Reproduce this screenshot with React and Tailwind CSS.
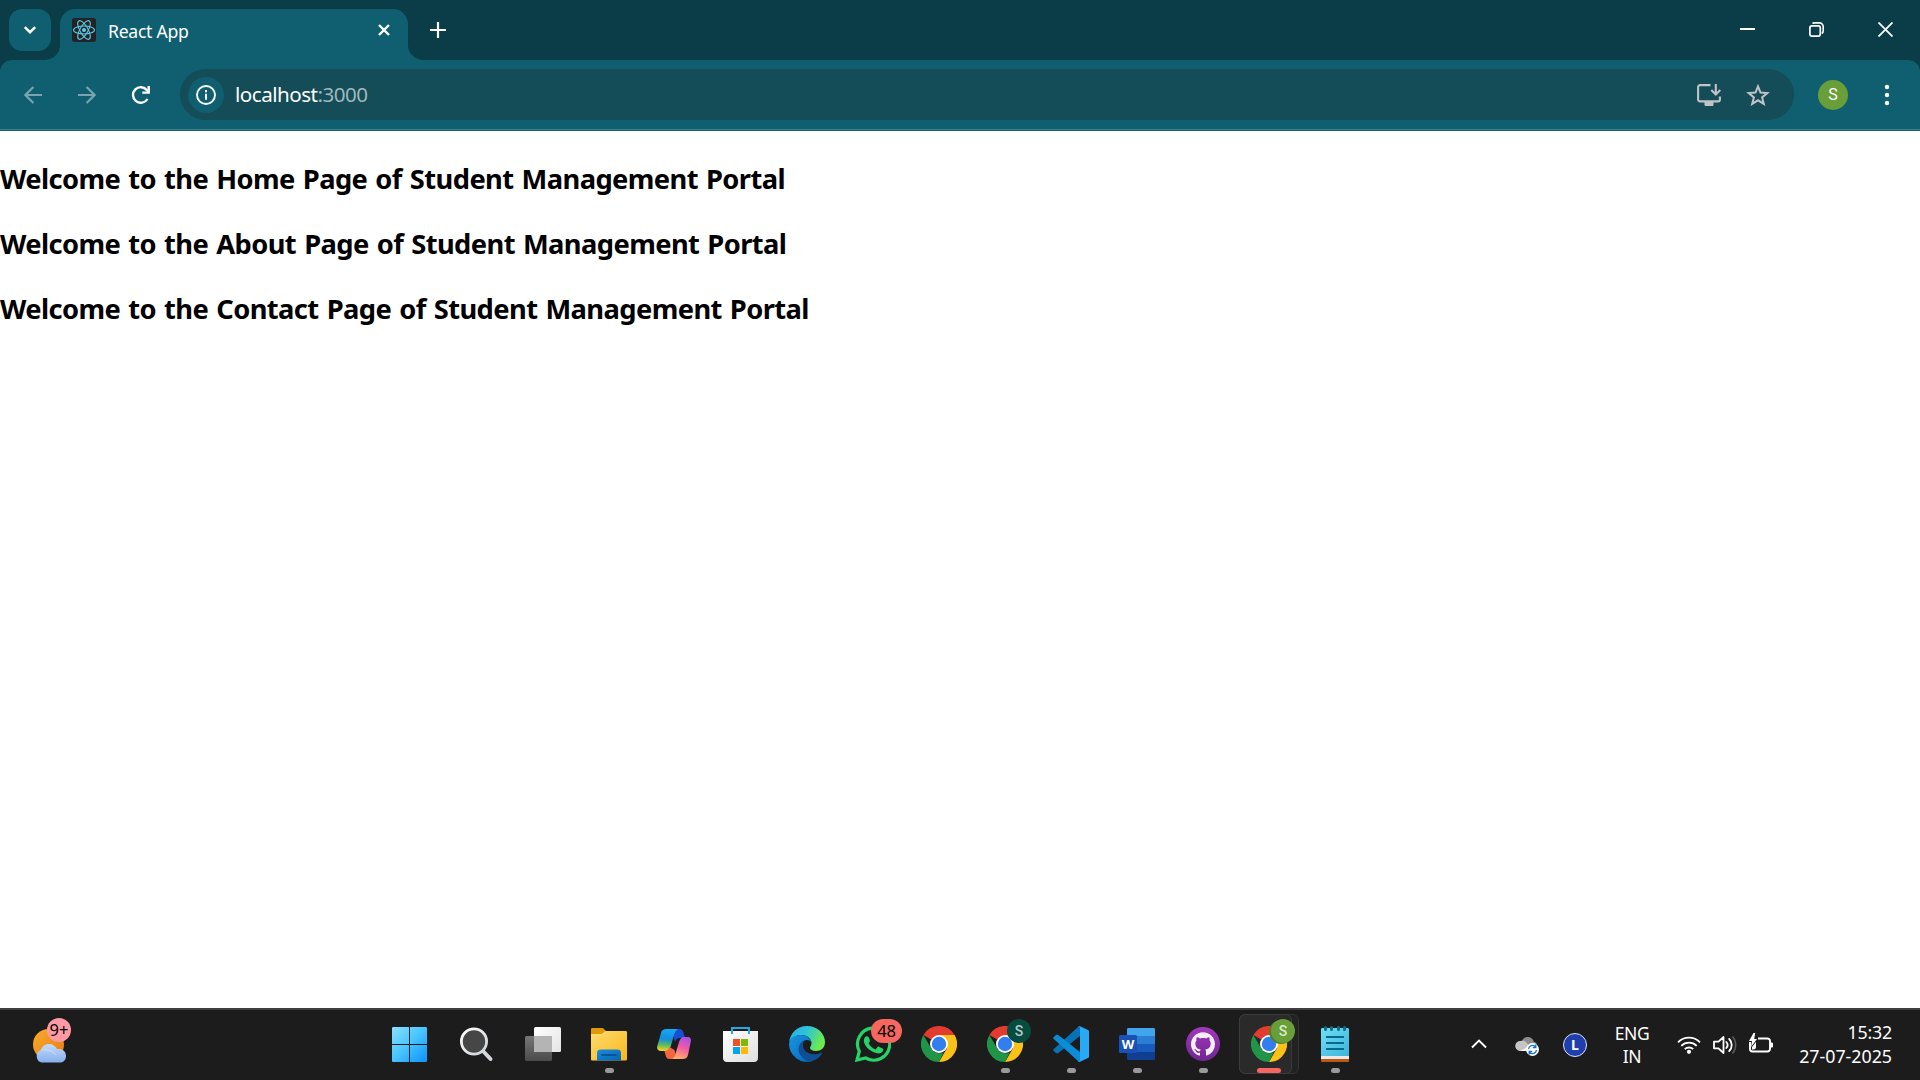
import React from "react";

const Icon = ({ w, h = w, className = "", children }) => (
  <svg width={w} height={h} viewBox={`0 0 ${w} ${h}`} fill="none" className={`block shrink-0 ${className}`}>
    {children}
  </svg>
);

function ReactLogo() {
  return (
    <Icon w={24}>
      <rect width="24" height="24" rx="2.5" fill="#222326" />
      <g stroke="#5ccbe6" strokeWidth="1.1">
        <ellipse cx="12" cy="12" rx="10.5" ry="4" />
        <ellipse cx="12" cy="12" rx="10.5" ry="4" transform="rotate(60 12 12)" />
        <ellipse cx="12" cy="12" rx="10.5" ry="4" transform="rotate(120 12 12)" />
      </g>
      <circle cx="12" cy="12" r="2" fill="#5ccbe6" />
    </Icon>
  );
}

function TabStrip() {
  return (
    <div className="flex h-[60px] bg-[#0a3d48]">
      <div className="ml-[9px] mt-[9px] flex size-[42px] items-center justify-center rounded-[13px] bg-[#0f5f70]">
        <Icon w={14} h={10}>
          <path d="M1.8 2.2 7 7.2l5.2-5" stroke="#fff" strokeWidth="2.5" />
        </Icon>
      </div>
      <div className="relative ml-[9px] mt-[9px] flex h-[51px] w-[348px] rounded-t-[15px] bg-[#0f5f70]">
        <Icon w={15} className="absolute bottom-0 -left-[15px]">
          <path d="M15 0v15H0A15 15 0 0 0 15 0Z" fill="#0f5f70" />
        </Icon>
        <Icon w={15} className="absolute bottom-0 -right-[15px]">
          <path d="M0 0v15h15A15 15 0 0 1 0 0Z" fill="#0f5f70" />
        </Icon>
        <div className="ml-3 mt-[9px]"><ReactLogo /></div>
        <span className="ml-3 mt-2 flex-1 whitespace-nowrap text-[17.6px] leading-7 tracking-[-0.28px] text-white">React App</span>
        <Icon w={12} className="mr-[18px] mt-[15px]">
          <path d="m1 1 10 10M11 1 1 11" stroke="#fff" strokeWidth="2.4" />
        </Icon>
      </div>
      <Icon w={16} className="ml-[22px] mt-[22px]">
        <path d="M8 0v16M0 8h16" stroke="#fff" strokeWidth="2.2" />
      </Icon>
      <div className="ml-auto mr-[27px] mt-[22px] flex gap-[54px]">
        <Icon w={15}><path d="M0 7h15" stroke="#fff" strokeWidth="2" /></Icon>
        <Icon w={15}>
          <rect x=".9" y="3.9" width="10.4" height="10.2" rx="2" stroke="#fff" strokeWidth="1.7" />
          <path d="M3.5 1.6C4 1 4.8.9 5.5.9h5a3.7 3.7 0 0 1 3.7 3.7V9c0 1-.4 2-1.4 2.5" stroke="#fff" strokeWidth="1.6" />
        </Icon>
        <Icon w={15}><path d="m.5.5 14 14M14.5.5l-14 14" stroke="#fff" strokeWidth="1.8" /></Icon>
      </div>
    </div>
  );
}

function Toolbar() {
  return (
    <div className="h-[71px] bg-[#0a3d48]">
      <div className="flex h-[71px] items-start rounded-t-[12px] bg-[#0f5f70]">
        <div className="flex h-[69px] w-full items-center">
          <Icon w={18} className="ml-6 mt-[1px]">
            <path d="M18 9H2M9.4 1 1.4 9l8 8" stroke="#7ba3ad" strokeWidth="2.2" />
          </Icon>
          <Icon w={18} className="ml-9 mt-[1px]">
            <path d="M0 9h16M8.6 1l8 8-8 8" stroke="#7ba3ad" strokeWidth="2.2" />
          </Icon>
          <Icon w={20} className="ml-[35px] mt-[1px]">
            <path d="M16.5 14A7.8 7.8 0 1 1 16 5.2L17.8 7" stroke="#fff" strokeWidth="2.4" />
            <path d="M18.9 1v7.8h-7.6V6.5h5.2V1Z" fill="#fff" />
          </Icon>
          <div className="ml-[29px] flex h-[51px] w-[1614px] items-center rounded-full bg-[#144c58] pl-2">
            <div className="flex size-9 items-center justify-center rounded-full bg-[#0f5f70]">
              <Icon w={20}>
                <circle cx="10" cy="10" r="9" stroke="#fff" strokeWidth="1.9" />
                <path d="M10 8.8v6M10 5v2.2" stroke="#fff" strokeWidth="2" />
              </Icon>
            </div>
            <span className="-mt-[2px] ml-[11px] flex-1 whitespace-nowrap text-[20.6px] leading-7 tracking-[-0.5px] text-white">
              localhost<span className="text-[#9fb8be]">:3000</span>
            </span>
            <Icon w={24} h={22} className="mr-[25px]">
              <path d="M13.5 1.1H3A1.9 1.9 0 0 0 1.1 3v12.5a1.9 1.9 0 0 0 1.9 1.9h18a1.9 1.9 0 0 0 1.9-1.9v-3" stroke="#c0c4c6" strokeWidth="2.1" />
              <path d="M18.8 0v9M14.3 6l4.5 4.5L23.3 6" stroke="#c0c4c6" strokeWidth="2.1" />
              <path d="M7.5 17.5h9V21a1 1 0 0 1-1 1h-7a1 1 0 0 1-1-1Z" fill="#c0c4c6" />
            </Icon>
            <Icon w={24} h={22} className="mr-6">
              <path d="m12 2.4 2.5 6.2 6.8.5-5.2 4.300 1.700 6.500L12 16.300l-5.800 3.600 1.700-6.500-5.200-4.300 6.800-.5Z" stroke="#c0c4c6" strokeWidth="2" />
            </Icon>
          </div>
          <div className="ml-6 flex size-[30px] items-center justify-center rounded-full bg-[#689f38] font-[Roboto] text-[16px] text-white">S</div>
          <Icon w={6} h={22} className="ml-9">
            <circle cx="3" cy="3" r="2.2" fill="#fff" />
            <circle cx="3" cy="11" r="2.2" fill="#fff" />
            <circle cx="3" cy="19" r="2.2" fill="#fff" />
          </Icon>
        </div>
      </div>
      <div className="-mt-[2px] h-px bg-[#3f7f8d]" />
    </div>
  );
}

function Gradient({ id, from, mid, to, x2 = 1, y2 = 1 }) {
  return (
    <linearGradient id={id} x1="0" y1="0" x2={x2} y2={y2}>
      <stop stopColor={from} />
      {mid && <stop offset=".5" stopColor={mid} />}
      <stop offset="1" stopColor={to} />
    </linearGradient>
  );
}

const StartIcon = () => (
  <Icon w={36} className="-translate-x-[1px]">
    <defs>
      <linearGradient id="win" gradientUnits="userSpaceOnUse" x1="0" y1="1" x2="35" y2="36">
        <stop stopColor="#8be0fd" /><stop offset=".45" stopColor="#4cc7ff" /><stop offset="1" stopColor="#0a93fb" />
      </linearGradient>
    </defs>
    <path fill="url(#win)" d="M1.5 1H17v17H0V2.500C0 1.500.5 1 1.500 1ZM18 1h15.500c1 0 1.500.5 1.500 1.500V18H18ZM0 19h17v17H1.500C.5 36 0 35.500 0 34.500ZM18 19h17v15.500c0 1-.5 1.500-1.500 1.500H18Z" />
  </Icon>
);

const SearchIcon = () => (
  <Icon w={36}>
    <defs><Gradient id="lens" from="#fff" to="#ccd2d8" /></defs>
    <path d="m24 25 7.500 8" stroke="#d3d7db" strokeWidth="4" strokeLinecap="round" />
    <circle cx="15" cy="15.500" r="12.600" fill="#464646" stroke="url(#lens)" strokeWidth="2.800" />
  </Icon>
);

const TaskViewIcon = () => (
  <Icon w={36}>
    <defs><Gradient id="tvf" from="#fff" to="#e4e4e4" /><Gradient id="tvb" from="#777" to="#4b4b4b" x2={0} /></defs>
    <rect y="10" width="27" height="25" rx="1.5" fill="url(#tvb)" />
    <rect x="9" y="1" width="27" height="25" rx="1.5" fill="url(#tvf)" />
    <path d="M9 10h18v16H10.500A1.500 1.500 0 0 1 9 24.500Z" fill="#b4b4b4" />
  </Icon>
);

const ExplorerIcon = () => (
  <Icon w={36}>
    <defs><Gradient id="fold" from="#ffdc72" to="#f8b817" /><Gradient id="pock" from="#1890dc" to="#0863b4" /></defs>
    <path d="M0 3.500C0 2.500.5 2 1.500 2H11c1.500 0 2.500 1.500 4 3v4H0Z" fill="#dd9b07" />
    <path d="M0 8h10c2 0 3-3 5-3h19.500c1 0 1.500.5 1.500 1.500V33c0 1-.5 1.500-1.500 1.500h-33C.5 34.500 0 34 0 33Z" fill="url(#fold)" />
    <path d="M6 34.500V27c0-2.500 1.500-3.500 3.500-3.500h17c2 0 3.500 1 3.500 3.500v7.500Z" fill="url(#pock)" />
    <path d="M11 29h14" stroke="#07549b" strokeWidth="2" strokeLinecap="round" />
  </Icon>
);

const CopilotIcon = () => (
  <Icon w={36}>
    <defs>
      <linearGradient id="cpa" x1=".4" y1="0" x2=".3" y2="1"><stop stopColor="#18a7f5" /><stop offset=".45" stopColor="#138ddc" /><stop offset=".72" stopColor="#58ba64" /><stop offset="1" stopColor="#ffd21d" /></linearGradient>
      <linearGradient id="cpb" x1=".7" y1="0" x2=".4" y2="1"><stop stopColor="#a751e8" /><stop offset=".45" stopColor="#ed58a8" /><stop offset="1" stopColor="#ffab69" /></linearGradient>
    </defs>
    <path d="M15 3h8c2 0 3 2 3.500 4l1.500 5h-5c-3 0-4 1-5 4Z" fill="#184fd2" />
    <path d="M9.500 3H21c-2 1-3 3-4 6l-3.500 12c-1 3-2.500 4-4.500 4H4c-3 0-4.500-2-3.700-5L4 7c.8-3 2.500-4 5.500-4Z" fill="url(#cpa)" />
    <path d="M20 33h-8c-2 0-3-2-3.500-4l-1-4c3 0 4-1 5-4l5 3Z" fill="#f5653f" />
    <path d="M25.500 33H15c2-1 3-3 4-7l3-10c1-3 2.500-5 5-5h3.500c3 0 4 2 3.200 5L31 29c-.8 3-2.500 4-5.500 4Z" fill="url(#cpb)" />
  </Icon>
);

const StoreIcon = () => (
  <Icon w={36}>
    <defs><Gradient id="bag" from="#fff" to="#dedede" /></defs>
    <path d="M0 5h35v27c0 2.500-1.500 4-4 4H4c-2.500 0-4-1.500-4-4Z" fill="url(#bag)" />
    <path d="M9 8V2h17v6" stroke="#25a9e5" strokeWidth="2" />
    <path fill="#f25022" d="M10 13h7v7h-7Z" /><path fill="#7fba00" d="M18 13h7v7h-7Z" />
    <path fill="#00a4ef" d="M10 21h7v7h-7Z" /><path fill="#ffb900" d="M18 21h7v7h-7Z" />
  </Icon>
);

const EdgeIcon = () => (
  <Icon w={36}>
    <defs>
      <Gradient id="edt" from="#2ba9e9" mid="#2dc5d6" to="#6ceb4c" y2={0.4} />
      <Gradient id="edb" from="#1996e0" to="#0765bc" />
    </defs>
    <path d="M0 17C1 7 8 0 18 0c11 0 18 8 18 16 0 6-4 9-9 9-4 0-6-1.500-6-3 0-1.500 1.500-2 1.500-5 0-4-4-8-10-8C6 9 1 13 0 17Z" fill="url(#edt)" />
    <path d="M0 18C1 12 6 9 11.500 9c6 0 10.500 3.500 11 7.500-2-3-5-3-7-2-5 2-7 8-3 14 3 4.500 7 7 11 6.500A18 18 0 0 1 0 18Z" fill="url(#edb)" />
    <path d="M15 15c-5 2-7 8-4 13.500 3 5 8 7.500 12 6.500 5-1 8-4.500 10-7.500.5-1-.3-1.200-1-.8-9 4-18-.5-18-7.200 0-2 .5-3.500 1-4.500Z" fill="#104f97" />
  </Icon>
);

const WhatsAppIcon = () => (
  <Icon w={36}>
    <path d="M2 34l2.300-8.600A16.100 16.100 0 1 1 10.600 32Z" stroke="#25d366" strokeWidth="3.200" />
    <path d="M9.300 12.500c.8-2 2.100-2.500 3.500-2 .8.300 1.100 1.200 1.700 2.800.7 1.800.5 2.100-.9 3.900 1.800 3.300 3.800 4.900 7 6.200l2-2.300c.6-.7 1.100-.6 1.800-.2l3.100 1.500c.8.4.9.9.6 2-.7 2.400-3.500 3.500-6 2.900-7.400-1.900-11.300-6-13-10.700-.4-1.300-.2-2.800.2-4.100Z" fill="#25d366" />
  </Icon>
);

const ChromeIcon = () => (
  <Icon w={36}>
    <path d="M18 18 2.400 9A18 18 0 0 1 33.600 9Z" fill="#e33b2e" />
    <path d="M18 9h15.600A18 18 0 0 1 18 36l7.800-13.500Z" fill="#fbc116" />
    <path d="M2.400 9 10.200 22.500c3 5 9 6 12.600 3.700L18 36A18 18 0 0 1 2.400 9Z" fill="#209547" />
    <circle cx="18" cy="18" r="9" fill="#fff" />
    <circle cx="18" cy="18" r="7.200" fill="#327eee" />
  </Icon>
);

const VSCodeIcon = () => (
  <Icon w={36}>
    <path d="M.8 25 3 27c.8.5 1.600.5 2.300 0L27 10V.5C26 .3 25.500.5 25 1L.8 23c-.8.8-.8 1.300 0 2Z" fill="#0872b6" />
    <path d="M.8 11 3 9c.8-.5 1.600-.5 2.300 0L27 26v9.500c-1 .2-1.500 0-2-.5L.8 13c-.8-.8-.8-1.300 0-2Z" fill="#0c8cd4" />
    <path d="M26.500 0 35 4c.7.4 1 .8 1 1.600v24.800c0 .8-.3 1.200-1 1.600l-8.500 4c-.7.2-1.200 0-1.700-.6.8.3 2.200 0 2.200-1.400V2c0-1.500-1.500-1.800-2.200-1.300.5-.6 1-.9 1.700-.7Z" fill="#27a9f5" />
  </Icon>
);

const WordIcon = () => (
  <div className="relative flex size-9">
    <Icon w={36}>
      <path d="M8 3.500C8 2.500 8.500 2 9.500 2h25c1 0 1.500.5 1.500 1.500V10H8Z" fill="#41a5ee" />
      <path d="M8 10h28v8H8Z" fill="#2b7cd3" /><path d="M8 18h28v8H8Z" fill="#185abd" />
      <path d="M8 26h28v6.500c0 1-.5 1.500-1.500 1.500h-25c-1 0-1.500-.5-1.500-1.500Z" fill="#103f91" />
      <rect y="9" width="18" height="18" rx="1.5" fill="#1b50b6" />
    </Icon>
    <span className="absolute left-0 top-[9px] w-[18px] text-center text-[13px] font-bold leading-[18px] text-white">W</span>
  </div>
);

const GitHubIcon = () => (
  <Icon w={36}>
    <defs><Gradient id="gh" from="#a238bd" to="#70268f" x2={0} /></defs>
    <circle cx="18" cy="18" r="17" fill="url(#gh)" />
    <g transform="translate(6 6.2)">
      <path fill="#f4eef7" d="M12 0C5.370 0 0 5.370 0 12c0 5.310 3.435 9.795 8.205 11.385.6.105.825-.255.825-.57 0-.285-.015-1.230-.015-2.235-3.015.555-3.795-.735-4.035-1.410-.135-.345-.720-1.410-1.230-1.695-.420-.225-1.020-.780-.015-.795.945-.015 1.620.870 1.845 1.230 1.080 1.815 2.805 1.305 3.495.990.105-.780.420-1.305.765-1.605-2.670-.3-5.460-1.335-5.460-5.925 0-1.305.465-2.385 1.230-3.225-.120-.3-.540-1.530.120-3.180 0 0 1.005-.315 3.300 1.230.960-.270 1.980-.405 3-.405s2.040.135 3 .405c2.295-1.560 3.300-1.230 3.300-1.230.660 1.650.240 2.880.120 3.180.765.840 1.230 1.905 1.230 3.225 0 4.605-2.805 5.625-5.475 5.925.435.375.810 1.095.810 2.220 0 1.605-.015 2.895-.015 3.300 0 .315.225.690.825.570A12.020 12.020 0 0 0 24 12c0-6.630-5.370-12-12-12Z" />
    </g>
  </Icon>
);

const NotepadIcon = () => (
  <Icon w={36}>
    <defs><Gradient id="note" from="#75dcf3" to="#3bb5db" /></defs>
    <rect x="4" y="29" width="28" height="7" rx="1" fill="#b85a13" />
    <rect x="4" y="27" width="28" height="6" fill="#eee9e7" />
    <path d="M4 3.500C4 2.500 4.500 2 5.500 2h25c1 0 1.500.5 1.500 1.500V30H4Z" fill="url(#note)" />
    <path d="M9 11h18M9 17h18M9 23h18" stroke="#046b8f" strokeWidth="2" />
    <path d="M8.500 1.500v2M14.500 1.500v2M21.500 1.500v2M27.500 1.500v2" stroke="#07718f" strokeWidth="3" strokeLinecap="round" />
  </Icon>
);

function Slot({ icon, dot, active, children }) {
  return (
    <div className="relative flex h-[70px] w-[66px] items-center justify-center">
      {active && (
        <>
          <div className="absolute left-[3px] top-1 h-[60px] w-[60px] rounded-[6px] border border-[#333] bg-[#222]" />
          <div className="absolute left-[3px] top-1 h-[60px] w-[53px] rounded-[6px] border border-[#3b3b3b] bg-[#2a2a2a]" />
        </>
      )}
      <div className="relative -mt-[2px]">{icon}</div>
      {dot && <div className="absolute bottom-[7px] left-[29px] h-[5px] w-[9px] rounded-full bg-[#9a9a9a]" />}
      {active && <div className="absolute bottom-[7px] left-[21px] h-[5px] w-6 rounded-full bg-[#f5675f]" />}
      {children}
    </div>
  );
}

function WeatherIcon() {
  return (
    <Icon w={34} h={36}>
      <defs><Gradient id="sun" from="#f8ad2d" to="#e87a12" /><Gradient id="cloud" from="#c5dbfa" to="#86b0ec" x2={0} /></defs>
      <circle cx="15.500" cy="17.500" r="15.500" fill="url(#sun)" />
      <path d="M9 35.500a6.500 6.500 0 0 1-1-12.500c1-4 4.500-6 8-6s6.500 2 8 5c5-.5 9 2 9 7 0 4-2.500 6.500-6 6.500Z" fill="url(#cloud)" />
      <path d="M8 23c7-1 12 1 15 5" stroke="#dce9fd" strokeWidth="1" opacity=".6" />
    </Icon>
  );
}

function Tray() {
  return (
    <div className="ml-auto flex h-[70px] items-center text-white">
      <Icon w={16} h={10} className="-mt-[3px]"><path d="m1 8.500 7-7 7 7" stroke="#fff" strokeWidth="1.9" /></Icon>
      <Icon w={24} h={22} className="ml-7 mt-[1px]">
        <path d="M7 6c2-5 10-6 12 1 3 0 4 4 2 7H9Z" fill="#8d8d8d" />
        <path d="M5 16a5 5 0 0 1 .5-10c4-1 6 1 8 4v6Z" fill="#c5c5c5" />
        <path d="M4 16c3 0 7-4 12-5v5Z" fill="#fff" />
        <circle cx="17.500" cy="14.500" r="6.500" fill="#fff" />
        <path d="M13.500 14a4 4 0 0 1 7-2.200M21.500 15a4 4 0 0 1-7 2.200M20.800 9.500v3h-3M14.200 19.500v-3h3" stroke="#1475c8" strokeWidth="1.3" />
      </Icon>
      <div className="-mt-px ml-6 flex size-6 items-center justify-center rounded-full border-[1.5px] border-[#dfe4f5] bg-[#1f3fae] text-[14px] font-bold leading-none">L</div>
      <div className="ml-[27px] w-[36px] text-center text-[17.5px] leading-[23px] tracking-[-0.4px]">
        <div>ENG</div>
        <div>IN</div>
      </div>
      <Icon w={24} h={20} className="ml-[27px] -mt-px">
        <path d="M1 7.300a15.500 15.500 0 0 1 22 0M4.300 10.800a10.900 10.900 0 0 1 15.400 0M7.800 14.200a6 6 0 0 1 8.400 0" stroke="#fff" strokeWidth="1.8" />
        <circle cx="12" cy="16.800" r="2.100" fill="#fff" />
      </Icon>
      <Icon w={24} h={20} className="ml-3 -mt-px">
        <path d="M1 6.700h4.500l5-4.700v16l-5-4.700H1Z" stroke="#fff" strokeWidth="1.8" strokeLinejoin="round" />
        <path d="M13.300 7a4.500 4.500 0 0 1 0 6M16.200 4a8.400 8.400 0 0 1 0 12" stroke="#fff" strokeWidth="1.8" strokeLinecap="round" />
        <path d="M19.500 1.500a13 13 0 0 1 0 17" stroke="#5c5c5c" strokeWidth="1.5" />
      </Icon>
      <Icon w={24} h={22} className="ml-3 -mt-[3px]">
        <path d="M9 5.500h9.500a2.500 2.500 0 0 1 2.500 2.500v8a2.500 2.500 0 0 1-2.500 2.500H3.500A2.500 2.500 0 0 1 1 16V9" stroke="#fff" strokeWidth="1.9" />
        <path d="M21 9.500h1.500c1 0 1.500.5 1.500 1.500v2c0 1-.5 1.500-1.500 1.500H21Z" fill="#fff" />
        <path d="M4.500 0 0 8h3l-1 6 6-8H5.200l1-6Z" fill="#fff" />
        <path d="M3 16.500V14l4-5v5c0 1.500-1 2.500-2.500 2.500Z" fill="#fff" />
      </Icon>
      <div className="-mt-[3px] ml-[24px] mr-[28px] w-[95px] whitespace-nowrap text-right text-[17.8px] leading-6">
        <div className="tracking-[-0.2px]">15:32</div>
        <div>27-07-2025</div>
      </div>
    </div>
  );
}

function Taskbar() {
  return (
    <div className="flex h-[72px] border-t-2 border-[#3f3f3f] bg-[#1c1c1c]">
      <div className="relative ml-[33px] mt-[17px] h-9 w-[345px]">
        <WeatherIcon />
        <div className="absolute -top-[9px] left-[14px] flex size-6 items-center justify-center rounded-full bg-[#ff99a4] text-[16.5px] leading-none text-black">9+</div>
      </div>
      <div className="flex">
        <Slot icon={<StartIcon />} />
        <Slot icon={<SearchIcon />} />
        <Slot icon={<TaskViewIcon />} />
        <Slot icon={<ExplorerIcon />} dot />
        <Slot icon={<CopilotIcon />} />
        <Slot icon={<StoreIcon />} />
        <Slot icon={<EdgeIcon />} />
        <Slot icon={<WhatsAppIcon />}>
          <div className="absolute left-[31px] top-[9px] flex h-6 w-[31px] items-center justify-center rounded-full bg-[#f5675f] text-[16.5px] leading-none tracking-[-0.3px] text-black">48</div>
        </Slot>
        <Slot icon={<ChromeIcon />} />
        <Slot icon={<ChromeIcon />} dot>
          <div className="absolute left-[35px] top-[9px] flex size-6 items-center justify-center rounded-full bg-[#064d40] font-[Roboto] text-[14px] font-medium leading-none text-[#b4cbc6]">S</div>
        </Slot>
        <Slot icon={<VSCodeIcon />} dot />
        <Slot icon={<WordIcon />} dot />
        <Slot icon={<GitHubIcon />} dot />
        <Slot icon={<ChromeIcon />} active>
          <div className="absolute left-[33px] top-[10px] size-6 rounded-full bg-[#4d822a]" />
          <div className="absolute left-[35px] top-[9px] flex size-6 items-center justify-center rounded-full bg-[#689f38] font-[Roboto] text-[14px] font-medium leading-none text-[#dce9cf]">S</div>
        </Slot>
        <Slot icon={<NotepadIcon />} dot />
      </div>
      <Tray />
    </div>
  );
}

const pages = ["Home", "About", "Contact"];

export default function App() {
  return (
    <div className="flex h-[1080px] w-[1920px] flex-col overflow-hidden bg-white font-['Noto_Sans','Open_Sans',sans-serif]">
      <TabStrip />
      <Toolbar />
      <main className="flex flex-1 flex-col gap-[25px] pt-7">
        {pages.map((p) => (
          <h2 key={p} className="whitespace-nowrap text-[27.3px] font-bold leading-10 tracking-[-0.58px] text-black [word-spacing:1.5px]">
            Welcome to the {p} Page of Student Management Portal
          </h2>
        ))}
      </main>
      <Taskbar />
    </div>
  );
}
